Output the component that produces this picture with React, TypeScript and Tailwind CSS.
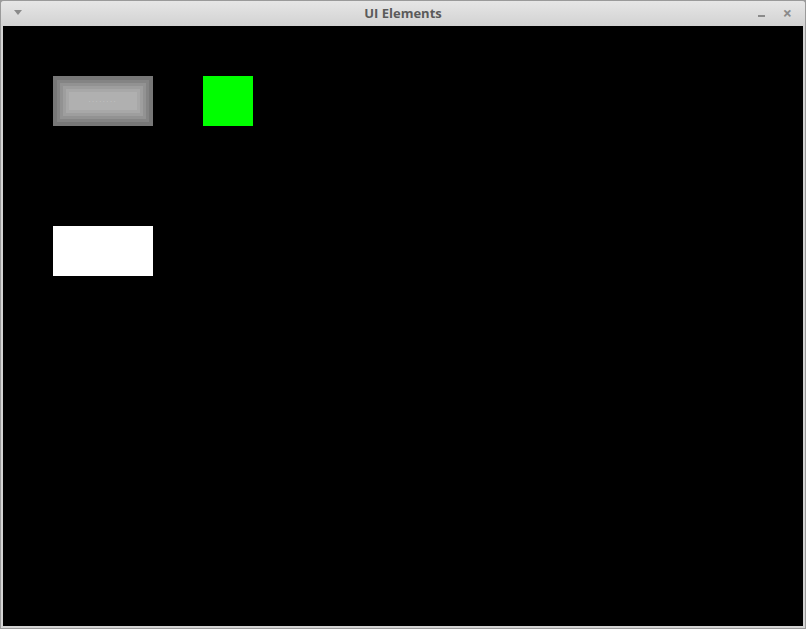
export default function App() {
  return (
    <div className="w-[806px] h-[629px] bg-[#9a9a9a] p-px font-['Open_Sans',sans-serif]">
      <div className="flex flex-col h-full bg-[#d4d4d4] rounded-t-[3px]">
        {/* Title bar */}
        <div className="relative flex items-center justify-center h-[25px] bg-gradient-to-b from-[#e6e6e6] to-[#d2d2d2] rounded-t-[3px]">
          <span className="absolute left-[13px] top-[9px] w-0 h-0 border-l-[4px] border-r-[4px] border-t-[5px] border-l-transparent border-r-transparent border-t-[#8a8a8a]" />
          <span className="text-[13px] font-bold text-[#5a5a5a]">UI Elements</span>
          <span className="absolute right-[40px] top-[14px] w-[7px] h-[2px] bg-[#8a8a8a]" />
          <span className="absolute right-[13px] top-[6px] text-[16px] leading-[13px] font-bold text-[#8a8a8a]">×</span>
        </div>
        {/* Content */}
        <div className="mx-[2px] mb-[2px] h-[600px] bg-black p-[50px] flex flex-col gap-[100px]">
          <div className="flex gap-[50px]">
            <div className="w-[100px] h-[50px] bg-[#b0b0b0] shadow-[inset_0_0_0_4px_#777777,inset_0_0_0_7px_#848484,inset_0_0_0_10px_#929292,inset_0_0_0_13px_#9e9e9e,inset_0_0_0_16px_#a8a8a8] flex items-center justify-center">
              <span className="text-[6px] tracking-[2px] text-[#d8d8d8] leading-none">········</span>
            </div>
            <div className="w-[50px] h-[50px] bg-[#00ff00]" />
          </div>
          <div className="w-[100px] h-[50px] bg-white" />
        </div>
      </div>
    </div>
  );
}
